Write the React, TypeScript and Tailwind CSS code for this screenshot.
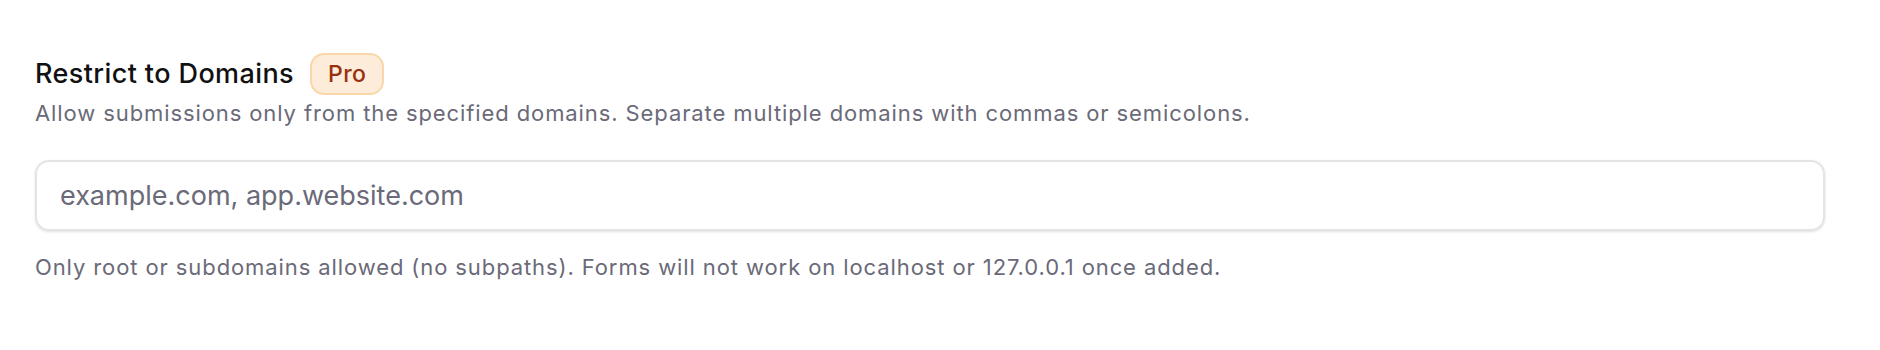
import { useState } from "react";

const App = () => {
  const [domains, setDomains] = useState("");

  return (
    <div className="w-[1880px] h-[350px] bg-white font-['Inter',sans-serif] pl-[35px] pt-[53px]">
      <div className="flex items-center gap-[16px]">
        <h2 className="text-[27px] leading-[42px] font-medium tracking-[0.4px] text-[#111113]">
          Restrict to Domains
        </h2>
        <span className="h-[42px] px-[16px] flex items-center rounded-[14px] border-2 border-[#f9d7ab] bg-[#fdecd9] text-[23px] font-medium tracking-[0.4px] text-[#98300f]">
          Pro
        </span>
      </div>
      <p className="mt-[4px] text-[22px] leading-[28px] tracking-[0.9px] text-[#6a6a78]">
        Allow submissions only from the specified domains. Separate multiple domains with commas or semicolons.
      </p>

      <input
        type="text"
        value={domains}
        onChange={(e) => setDomains(e.target.value)}
        placeholder="example.com, app.website.com"
        className="mt-[33px] block w-[1790px] h-[71px] px-[23px] rounded-[14px] border-2 border-[#e4e4e7] shadow-sm text-[27px] text-[#111113] placeholder:text-[#6a6a78] outline-none"
      />

      <p className="mt-[22px] text-[22px] leading-[28px] tracking-[0.9px] text-[#6a6a78]">
        Only root or subdomains allowed (no subpaths). Forms will not work on localhost or 127.0.0.1 once added.
      </p>
    </div>
  );
};

export default App;
